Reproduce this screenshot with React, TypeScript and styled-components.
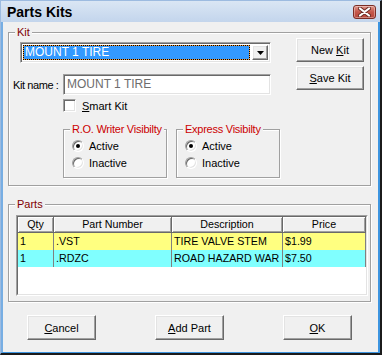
import styled, { createGlobalStyle } from 'styled-components'

const FACE = '#f0f0f0'

interface Part {
  qty: number
  partNumber: string
  description: string
  price: string
  color: string
}

const COLUMNS = [
  { label: 'Qty', width: 36 },
  { label: 'Part Number', width: 118 },
  { label: 'Description', width: 111 },
  { label: 'Price', width: 83 },
]

const PARTS: Part[] = [
  { qty: 1, partNumber: '.VST', description: 'TIRE VALVE STEM', price: '$1.99', color: '#ffff80' },
  { qty: 1, partNumber: '.RDZC', description: 'ROAD HAZARD WAR', price: '$7.50', color: '#80ffff' },
]

const GRID = COLUMNS.map((c) => `${c.width}px`).join(' ')

export default function App() {
  return (
    <>
      <GlobalStyle />
      <Window>
        <TitleBar>
          <Title>Parts Kits</Title>
          <CloseButton aria-label="Close">
            <CloseIcon />
          </CloseButton>
        </TitleBar>
        <Client>
          <GroupBox $height={154}>
            <Legend>Kit</Legend>
            <KitLayout>
              <KitFields>
                <Combo>
                  <ComboValue>MOUNT 1 TIRE</ComboValue>
                  <DropButton>
                    <svg width="7" height="4" viewBox="0 0 7 4">
                      <path d="M0 0h7L3.5 4z" fill="#000" />
                    </svg>
                  </DropButton>
                </Combo>
                <NameRow>
                  <FieldLabel>Kit name :</FieldLabel>
                  <TextBox>MOUNT 1 TIRE</TextBox>
                </NameRow>
                <CheckRow>
                  <CheckBox />
                  <span>
                    <u>S</u>mart Kit
                  </span>
                </CheckRow>
                <VisRow>
                  <VisibilityGroup title="R.O. Writer Visibilty" />
                  <VisibilityGroup title="Express Visibilty" />
                </VisRow>
              </KitFields>
              <KitButtons>
                <Button $width={68} $height={24}>
                  New <u>K</u>it
                </Button>
                <Button $width={68} $height={24}>
                  <u>S</u>ave Kit
                </Button>
              </KitButtons>
            </KitLayout>
          </GroupBox>

          <PartsGroup $height={98}>
            <Legend>Parts</Legend>
            <TableFrame>
              <TableGrid>
                {COLUMNS.map((c) => (
                  <HeadCell key={c.label}>{c.label}</HeadCell>
                ))}
                {PARTS.map((p) => (
                  <Row key={p.partNumber} $color={p.color}>
                    <Cell>{p.qty}</Cell>
                    <Cell>{p.partNumber}</Cell>
                    <Cell>{p.description}</Cell>
                    <Cell>{p.price}</Cell>
                  </Row>
                ))}
              </TableGrid>
            </TableFrame>
          </PartsGroup>

          <ButtonRow>
            <Button $width={69} $height={25}>
              <u>C</u>ancel
            </Button>
            <Button $width={69} $height={25}>
              <u>A</u>dd Part
            </Button>
            <Button $width={69} $height={25}>
              <u>O</u>K
            </Button>
          </ButtonRow>
        </Client>
      </Window>
    </>
  )
}

function VisibilityGroup({ title }: { title: string }) {
  return (
    <GroupBox $width={104} $height={49}>
      <Legend $color="#cc0000" $tight>
        {title}
      </Legend>
      <RadioList>
        <RadioRow>
          <Radio $checked />
          Active
        </RadioRow>
        <RadioRow>
          <Radio />
          Inactive
        </RadioRow>
      </RadioList>
    </GroupBox>
  )
}

function CloseIcon() {
  return (
    <svg width="13" height="10" viewBox="0 0 13 10">
      <path d="M2 1.5l9 7M11 1.5l-9 7" stroke="#6b2b24" strokeWidth="4" strokeLinecap="round" />
      <path d="M2 1.5l9 7M11 1.5l-9 7" stroke="#ffffff" strokeWidth="2.2" strokeLinecap="round" />
    </svg>
  )
}

const GlobalStyle = createGlobalStyle`
  * { box-sizing: border-box; }
  html, body { margin: 0; padding: 0; }
  body {
    background: #ffffff;
    font-family: 'Liberation Sans', Arial, sans-serif;
    font-size: 11px;
    color: #000;
  }
`

const Window = styled.div`
  width: 382px;
  height: 355px;
  display: flex;
  flex-direction: column;
  border-top: 1px solid #9dbbe0;
  border-left: 1px solid #9dbbe0;
  border-right: 2px solid #1b1b1b;
  border-bottom: 2px solid #1b1b1b;
`

const TitleBar = styled.div`
  height: 21px;
  flex: none;
  display: flex;
  align-items: center;
  justify-content: space-between;
  padding: 0 4px 0 6px;
  background: linear-gradient(to bottom, #dae6f4, #c3d5ec);
`

const Title = styled.div`
  font-size: 14px;
  font-weight: bold;
  color: #000;
`

const CloseButton = styled.div`
  width: 23px;
  height: 14px;
  margin-top: 1px;
  display: flex;
  align-items: center;
  justify-content: center;
  border: 1px solid #7b2d25;
  border-radius: 3px;
  background: linear-gradient(to bottom, #e0968a, #c4574a 50%, #b8463a);
  box-shadow: inset 0 0 0 1px rgba(255, 255, 255, 0.35);
`

const Client = styled.div`
  flex: 1;
  display: flex;
  flex-direction: column;
  padding: 10px 7px 0 5px;
  background: ${FACE};
  border-left: 2px solid #77aee3;
  border-right: 2px solid #3d95e0;
  border-bottom: 1px solid #3d95e0;
`

const GroupBox = styled.div<{ $width?: number; $height: number }>`
  position: relative;
  flex: none;
  ${(p) => (p.$width ? `width: ${p.$width}px;` : '')}
  height: ${(p) => p.$height}px;
  border: 1px solid #a0a0a0;
  box-shadow: inset 1px 1px 0 #ffffff, 1px 1px 0 #ffffff;
`

const PartsGroup = styled(GroupBox)`
  margin-top: 18px;
`

const Legend = styled.span<{ $color?: string; $tight?: boolean }>`
  position: absolute;
  top: -7px;
  left: 6px;
  padding: 0 2px;
  line-height: 13px;
  background: ${FACE};
  color: ${(p) => p.$color ?? '#800000'};
  letter-spacing: ${(p) => (p.$tight ? '-0.25px' : 'normal')};
  white-space: nowrap;
`

const KitLayout = styled.div`
  display: flex;
  padding: 5px 6px 0 4px;
`

const KitFields = styled.div`
  display: flex;
  flex-direction: column;
  width: 258px;
`

const sunken = `
  border: 1px solid;
  border-color: #a0a0a0 #ffffff #ffffff #a0a0a0;
  box-shadow: inset 1px 1px 0 #696969, inset -1px -1px 0 #e3e3e3;
`

const Combo = styled.div`
  width: 251px;
  height: 21px;
  margin: 4px 0 0 7px;
  padding: 2px;
  display: flex;
  gap: 2px;
  background: #ffffff;
  ${sunken}
`

const ComboValue = styled.div`
  flex: 1;
  padding-left: 1px;
  line-height: 13px;
  color: #ffffff;
  font-size: 12px;
  border: 1px dotted #000;
  background: linear-gradient(#3399ff, #3399ff) padding-box, #f39a3a border-box;
`

const raised = `
  border: 1px solid;
  border-color: #ffffff #696969 #696969 #ffffff;
  box-shadow: inset -1px -1px 0 #a0a0a0, inset 1px 1px 0 #e3e3e3;
  background: ${FACE};
`

const DropButton = styled.div`
  width: 16px;
  display: flex;
  align-items: center;
  justify-content: center;
  ${raised}
`

const NameRow = styled.div`
  display: grid;
  grid-template-columns: 50px 208px;
  align-items: center;
  margin-top: 11px;
`

const FieldLabel = styled.span`
  letter-spacing: -0.4px;
`

const TextBox = styled.div`
  height: 21px;
  padding: 0 3px;
  line-height: 19px;
  font-size: 12px;
  color: #6d6d6d;
  background: #ffffff;
  ${sunken}
`

const CheckRow = styled.div`
  display: flex;
  align-items: center;
  gap: 6px;
  height: 13px;
  margin-top: 4px;
  padding-left: 50px;
`

const CheckBox = styled.span`
  width: 13px;
  height: 13px;
  background: #ffffff;
  ${sunken}
`

const VisRow = styled.div`
  display: flex;
  gap: 9px;
  margin-top: 17px;
  padding-left: 50px;
  width: 330px;
`

const RadioList = styled.div`
  padding: 7px 0 0 8px;
`

const RadioRow = styled.div`
  display: flex;
  align-items: center;
  gap: 5px;
  height: 17px;
`

const Radio = styled.span<{ $checked?: boolean }>`
  width: 12px;
  height: 12px;
  border-radius: 50%;
  display: inline-flex;
  align-items: center;
  justify-content: center;
  border: 1px solid;
  border-color: #a0a0a0 #ffffff #ffffff #a0a0a0;
  box-shadow: inset 1px 1px 0 #696969, inset -1px -1px 0 #e3e3e3;
  background: #ffffff;

  &::after {
    content: '';
    width: 4px;
    height: 4px;
    border-radius: 50%;
    background: ${(p) => (p.$checked ? '#000000' : 'transparent')};
  }
`

const KitButtons = styled.div`
  display: flex;
  flex-direction: column;
  gap: 4px;
  margin-left: auto;
`

const Button = styled.button<{ $width: number; $height: number }>`
  width: ${(p) => p.$width}px;
  height: ${(p) => p.$height}px;
  padding: 0;
  margin: 0;
  font-family: inherit;
  font-size: 11px;
  color: #000;
  ${raised}
`

const TableFrame = styled.div`
  height: 81px;
  margin: 10px 2px 0 7px;
  border: 1px solid;
  border-color: #a0a0a0 #ffffff #ffffff #a0a0a0;
`

const TableGrid = styled.div`
  height: 100%;
  display: grid;
  grid-template-columns: ${GRID};
  grid-auto-rows: 17px;
  grid-template-rows: 16px;
  align-content: start;
  background: #ffffff;
  border: 1px solid;
  border-color: #696969 #e3e3e3 #e3e3e3 #696969;
  font-size: 10.7px;
`

const HeadCell = styled.div`
  text-align: center;
  line-height: 15px;
  background: ${FACE};
  border-right: 1px solid #696969;
  border-bottom: 1px solid #696969;
  box-shadow: inset 1px 1px 0 #ffffff, inset -1px -1px 0 #a0a0a0;
`

const Row = styled.div<{ $color: string }>`
  display: contents;

  & > div {
    background: ${(p) => p.$color};
  }
`

const Cell = styled.div`
  padding: 0 2px;
  line-height: 17px;
  white-space: nowrap;
  overflow: hidden;
  border-right: 1px solid #808080;
`

const ButtonRow = styled.div`
  display: flex;
  justify-content: space-between;
  margin-top: 13px;
  padding: 0 19px 0 19px;
`
